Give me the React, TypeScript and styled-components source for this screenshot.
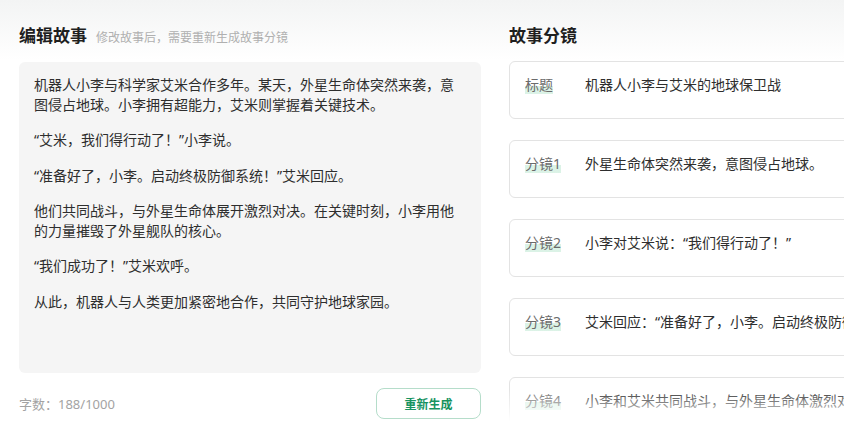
import styled, { createGlobalStyle } from "styled-components";

const GlobalStyle = createGlobalStyle`
	html, body {
		margin: 0;
		padding: 0;
		background: #ffffff;
	}
	body {
		font-family: "Noto Sans", "Noto Sans CJK SC", sans-serif;
		color: #333333;
	}
`;

const Page = styled.div`
	width: 844px;
	height: 423px;
	overflow: hidden;
	display: flex;
	gap: 28px;
	padding: 24px 0 0 19px;
	box-sizing: border-box;
	background: linear-gradient(#f3f4f4 0px, #ffffff 60px);
`;

const Column = styled.div`
	position: relative;
	width: 462px;
	flex-shrink: 0;
	display: flex;
	flex-direction: column;
`;

const Fade = styled.div`
	position: absolute;
	left: -10px;
	right: -10px;
	bottom: 0;
	height: 34px;
	background: linear-gradient(rgba(255, 255, 255, 0), #ffffff 95%);
	pointer-events: none;
`;

const Header = styled.div`
	display: flex;
	align-items: baseline;
	gap: 9px;
	height: 24px;
	margin-bottom: 14px;
`;

const Title = styled.h2`
	margin: 0;
	font-size: 17px;
	line-height: 24px;
	font-weight: 700;
	color: #1f1f1f;
`;

const Hint = styled.span`
	font-size: 12px;
	color: #b0b0b0;
`;

const StoryBox = styled.div`
	height: 311px;
	box-sizing: border-box;
	background: #f5f5f5;
	border-radius: 6px;
	padding: 13px 16px 0 15px;
	font-size: 14px;
	line-height: 19.5px;
	color: #2e2e2e;
`;

const Para = styled.p`
	margin: 0 0 16px;
`;

const Footer = styled.div`
	display: flex;
	justify-content: space-between;
	align-items: center;
	margin-top: 15px;
`;

const Count = styled.span`
	font-size: 13px;
	color: #a3a3a3;
`;

const RegenButton = styled.button`
	width: 105px;
	height: 31px;
	border: 1px solid #b5ddca;
	border-radius: 8px;
	background: #ffffff;
	color: #17935f;
	font-family: inherit;
	font-size: 12px;
	font-weight: 700;
	cursor: pointer;
`;

const ShotList = styled.div`
	display: flex;
	flex-direction: column;
	gap: 21px;
	margin-top: -1px;
`;

const ShotCard = styled.div`
	width: 462px;
	min-height: 58px;
	box-sizing: border-box;
	border: 1px solid #e3e3e3;
	border-radius: 6px;
	background: #ffffff;
	padding: 13px 15px;
	display: flex;
	font-size: 14px;
	line-height: 20px;
	white-space: nowrap;
`;

const ShotLabel = styled.span`
	width: 60px;
	flex-shrink: 0;
	color: #6b6b6b;
	span {
		background: linear-gradient(transparent 58%, rgba(190, 232, 210, 0.55) 58%);
	}
`;

const ShotText = styled.span`
	color: #2e2e2e;
`;

const story = [
	"机器人小李与科学家艾米合作多年。某天，外星生命体突然来袭，意图侵占地球。小李拥有超能力，艾米则掌握着关键技术。",
	"“艾米，我们得行动了！”小李说。",
	"“准备好了，小李。启动终极防御系统！”艾米回应。",
	"他们共同战斗，与外星生命体展开激烈对决。在关键时刻，小李用他的力量摧毁了外星舰队的核心。",
	"“我们成功了！”艾米欢呼。",
	"从此，机器人与人类更加紧密地合作，共同守护地球家园。",
];

const shots = [
	{ label: "标题", text: "机器人小李与艾米的地球保卫战" },
	{ label: "分镜1", text: "外星生命体突然来袭，意图侵占地球。" },
	{ label: "分镜2", text: "小李对艾米说：“我们得行动了！”" },
	{ label: "分镜3", text: "艾米回应：“准备好了，小李。启动终极防御系统！”" },
	{ label: "分镜4", text: "小李和艾米共同战斗，与外星生命体激烈对决。" },
];

export default function App() {
	return (
		<>
			<GlobalStyle />
			<Page>
				<Column>
					<Header>
						<Title>编辑故事</Title>
						<Hint>修改故事后，需要重新生成故事分镜</Hint>
					</Header>
					<StoryBox>
						{story.map((p, i) => (
							<Para key={i}>{p}</Para>
						))}
					</StoryBox>
					<Footer>
						<Count>字数：188/1000</Count>
						<RegenButton>重新生成</RegenButton>
					</Footer>
				</Column>
				<Column>
					<Header>
						<Title>故事分镜</Title>
					</Header>
					<ShotList>
						{shots.map((s) => (
							<ShotCard key={s.label}>
								<ShotLabel>
									<span>{s.label}</span>
								</ShotLabel>
								<ShotText>{s.text}</ShotText>
							</ShotCard>
						))}
					</ShotList>
					<Fade />
				</Column>
			</Page>
		</>
	);
}
